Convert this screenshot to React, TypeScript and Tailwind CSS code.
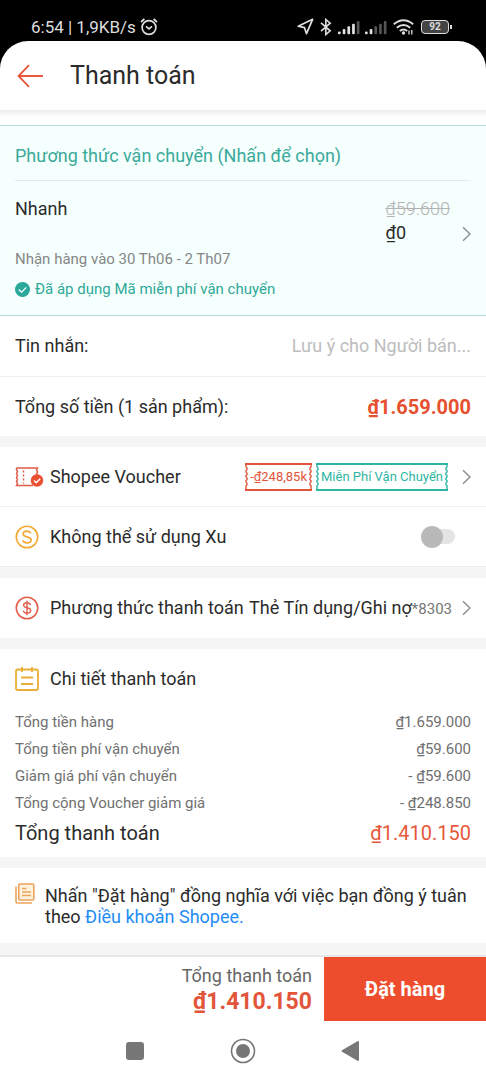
import type { ReactNode } from 'react';

const summary = [
  { label: 'Tổng tiền hàng', value: '₫1.659.000' },
  { label: 'Tổng tiền phí vận chuyển', value: '₫59.600' },
  { label: 'Giảm giá phí vận chuyển', value: '- ₫59.600' },
  { label: 'Tổng cộng Voucher giảm giá', value: '- ₫248.850' },
];

function Chevron() {
  return (
    <svg className="w-[9px] h-4 shrink-0" viewBox="0 0 9 16" fill="none" stroke="#8c8c8c" strokeWidth="1.4">
      <path d="M1 1.2L8 8l-7 6.8" />
    </svg>
  );
}

function Gap() {
  return <div className="h-[11px] bg-[#f5f5f5]" />;
}

function ChipEdge({ className = '' }: { className?: string }) {
  return (
    <svg className={`w-1 h-7 shrink-0 ${className}`} viewBox="0 0 4 28" fill="none" stroke="currentColor" strokeWidth="1.4">
      <path d="M0 1h4M0 27h4" strokeWidth="2" />
      <path d="M1 1v3q2.4 1.5 0 3.5v1.5q2.4 2 0 3.5v1.5q2.4 2 0 3.5v1.5q2.4 2 0 3.5v4.5" />
    </svg>
  );
}

function Chip({ color, children }: { color: string; children: ReactNode }) {
  return (
    <span className={`flex h-7 ${color}`}>
      <ChipEdge />
      <span className="flex items-center border-y-2 border-current px-px text-[13px] leading-4 whitespace-nowrap">
        {children}
      </span>
      <ChipEdge className="-scale-x-100" />
    </span>
  );
}

function Signal({ level }: { level: number }) {
  return (
    <svg className="w-[22px] h-4" viewBox="0 0 22 16">
      {[0, 1, 2, 3, 4].map((i) => (
        <rect
          key={i}
          x={i * 4.7}
          y={12.5 - i * 2.6}
          width="2.7"
          height={2.8 + i * 2.6}
          rx="1"
          fill={i < level ? '#e2e2e2' : '#555'}
        />
      ))}
    </svg>
  );
}

function StatusBar() {
  return (
    <div className="flex items-center h-[41px] pt-3 pl-[31px] pr-[34px] text-[#dedede]">
      <span className="text-[17px] leading-6 whitespace-nowrap">6:54 | 1,9KB/s</span>
      <svg className="ml-1 w-[18px] h-[18px]" viewBox="0 0 18 18" fill="none" stroke="currentColor" strokeWidth="1.7">
        <circle cx="9" cy="9.5" r="6.9" />
        <path d="M6 8.3l3 2.6 3-2.6M1 4l3.4-3M17 4l-3.4-3" />
      </svg>
      <div className="ml-auto flex items-center">
        <svg className="w-[17px] h-[17px]" viewBox="0 0 17 17" fill="none" stroke="currentColor" strokeWidth="1.7" strokeLinejoin="round">
          <path d="M15.6 1.3L1.2 8.2l6.3 1.5 2 6z" />
        </svg>
        <svg className="ml-1.5 w-3 h-[18px]" viewBox="0 0 12 18" fill="none" stroke="currentColor" strokeWidth="1.6">
          <path d="M1 4.8l9.2 8-4.4 3.7V1.5l4.4 3.7-9.2 8" />
        </svg>
        <div className="ml-1.5 flex gap-[5px]">
          <Signal level={4} />
          <Signal level={2} />
        </div>
        <svg className="ml-1.5 w-[21px] h-4" viewBox="0 0 21 16" fill="none" stroke="currentColor" strokeWidth="2">
          <path d="M.8 5.2q9.7-8 19.4 0M3.8 8.8q6.7-5.5 13.4 0M6.8 12q3.7-3 7.4 0" />
          <circle cx="10.5" cy="14" r="1.7" fill="currentColor" stroke="none" />
          <path d="M16 11.5v4M18.8 11v4.5" strokeWidth="1.3" />
        </svg>
        <span className="ml-[7px] flex items-center">
          <span className="flex h-[14px] w-[28px] items-center justify-center rounded-[4px] border border-[#dedede] bg-[#444] text-[10px] leading-3 font-bold">
            92
          </span>
          <span className="ml-px h-1 w-[2px] bg-[#dedede]" />
        </span>
      </div>
    </div>
  );
}

export default function App() {
  return (
    <div className="min-h-screen bg-black font-['Roboto',sans-serif] text-[#2b2b2b]">
      <StatusBar />

      <div className="overflow-hidden rounded-t-[28px] bg-white">
        <header className="flex h-[69px] items-center pl-[17px]">
          <button type="button" aria-label="Quay lại" className="flex">
            <svg className="h-6 w-[27px]" viewBox="0 0 27 24" fill="none" stroke="#e8583a" strokeWidth="1.8">
              <path d="M26 12H1.5M12 1.2L1.5 12 12 22.8" />
            </svg>
          </button>
          <h1 className="ml-[26px] text-[25px] leading-8">Thanh toán</h1>
        </header>
        <div className="h-[15px] bg-linear-to-b from-[#ececec] to-white to-50%" />

        {/* Vận chuyển */}
        <section className="border-y border-[#b5ddd9] bg-[#f5fffe] px-[15px] pb-4">
          <h2 className="border-b border-[#e1ecea] pt-[18px] pb-3 text-[18px] leading-6 text-[#3aaa99]">
            Phương thức vận chuyển (Nhấn để chọn)
          </h2>
          <button type="button" className="mt-4 flex w-full items-start text-left text-[18px] leading-6">
            <span className="flex-1">Nhanh</span>
            <span className="flex flex-col">
              <s className="font-light text-[#b3b3b3]">₫59.600</s>
              <span>₫0</span>
            </span>
            <span className="ml-3 mt-[29px]">
              <Chevron />
            </span>
          </button>
          <p className="mt-1 text-[15px] leading-5 text-[#868686]">Nhận hàng vào 30 Th06 - 2 Th07</p>
          <p className="mt-[10px] flex items-center gap-[5px] text-[15px] leading-5 text-[#2fa898]">
            <svg className="h-[15px] w-[15px]" viewBox="0 0 15 15">
              <circle cx="7.5" cy="7.5" r="7.5" fill="#2aa899" />
              <path d="M3.8 7.5l2.8 2.6 4.7-4.7" fill="none" stroke="#fff" strokeWidth="1.2" />
            </svg>
            Đã áp dụng Mã miễn phí vận chuyển
          </p>
        </section>

        <div className="flex h-[61px] items-center border-b border-[#eee] px-[15px] text-[18px] leading-6">
          <label htmlFor="note">Tin nhắn:</label>
          <input
            id="note"
            type="text"
            placeholder="Lưu ý cho Người bán..."
            className="min-w-0 flex-1 bg-transparent text-right outline-none placeholder:text-[#bdbdbd]"
          />
        </div>
        <div className="flex h-[59px] items-center justify-between px-[15px] leading-6">
          <span className="text-[18px]">Tổng số tiền (1 sản phẩm):</span>
          <span className="text-[20px] font-bold text-[#e6502f]">₫1.659.000</span>
        </div>
        <Gap />

        {/* Voucher và Xu */}
        <button type="button" className="flex h-[60px] w-full items-center border-b border-[#eee] px-[15px] text-left">
          <svg className="h-5 w-[29px]" viewBox="0 0 29 20" fill="none" stroke="#e05a45" strokeWidth="1.5">
            <path d="M1.5 1h21l-1 2 1 2-1 2 1 2M18 18.5H1.5l1-2-1-2 1-2-1-2 1-2-1-2 1-2-1-2v-1.5" />
            <path d="M8.5 3.5v13" strokeDasharray="2 2" />
            <circle cx="22" cy="13.5" r="6.2" fill="#e9502f" stroke="none" />
            <path d="M19 13.5l2.2 2.2 4-4" stroke="#fff" strokeWidth="1.4" />
          </svg>
          <span className="ml-[6px] flex-1 text-[18px] leading-6">Shopee Voucher</span>
          <span className="flex gap-1">
            <Chip color="text-[#e2553a]">-₫248,85k</Chip>
            <Chip color="text-[#2db5a3]">Miễn Phí Vận Chuyển</Chip>
          </span>
          <span className="ml-[14px]">
            <Chevron />
          </span>
        </button>
        <label className="flex h-[60px] items-center border-b border-[#eee] pr-[31px] pl-[15px]">
          <svg className="h-6 w-6" viewBox="0 0 24 24" fill="none" stroke="#f2aa35">
            <circle cx="12" cy="12" r="10.7" strokeWidth="1.6" />
            <path d="M15.8 8.3C15 6.7 13.6 6.2 12 6.2c-2.2 0-3.8 1.1-3.8 2.8 0 1.9 1.8 2.4 3.8 2.9s4.1 1.1 4.1 3.1c0 1.8-1.8 2.9-4.1 2.9-1.9 0-3.5-.8-4.2-2.5" strokeWidth="1.7" />
          </svg>
          <span className="ml-[11px] flex-1 text-[18px] leading-6">Không thể sử dụng Xu</span>
          <input type="checkbox" role="switch" className="peer sr-only" />
          <span className="flex items-center peer-checked:flex-row-reverse">
            <span className="z-10 h-[22px] w-[22px] rounded-full bg-[#b9b9b9]" />
            <span className="-ml-4 h-[15px] w-7 rounded-full bg-[#e4e4e4]" />
          </span>
        </label>
        <Gap />

        <button type="button" className="flex h-[60px] w-full items-center px-[15px] text-left">
          <svg className="h-6 w-6" viewBox="0 0 24 24" fill="none" stroke="#e2604e">
            <circle cx="12" cy="12" r="10.7" strokeWidth="1.6" />
            <path d="M15.5 9c-.4-1.5-1.7-2.2-3.5-2.2-2 0-3.4.9-3.4 2.4 0 1.7 1.5 2.2 3.4 2.6s3.7 1 3.7 2.8c0 1.6-1.6 2.6-3.7 2.6-2 0-3.4-.9-3.7-2.5M12 4.8v14.4" strokeWidth="1.4" />
          </svg>
          <span className="ml-[11px] flex-1 text-[18px] leading-6 whitespace-nowrap">Phương thức thanh toán</span>
          <span className="flex items-baseline leading-6 whitespace-nowrap">
            <span className="text-[18px]">Thẻ Tín dụng/Ghi nợ</span>
            <span className="text-[15px] text-[#757575]">*8303</span>
          </span>
          <span className="ml-[10px]">
            <Chevron />
          </span>
        </button>
        <Gap />

        {/* Chi tiết thanh toán */}
        <section className="px-[15px] pt-[18px] pb-3">
          <h2 className="flex items-center text-[18px] leading-6">
            <svg className="mr-[11px] h-6 w-6" viewBox="0 0 24 24" fill="none" stroke="#e9ae35" strokeWidth="1.8">
              <rect x="1" y="2.5" width="22" height="20.5" rx="1.5" />
              <path d="M7 0v5M17 0v5M6 10.5h12M6 17h12" />
            </svg>
            Chi tiết thanh toán
          </h2>
          <dl className="mt-[17px]">
            {summary.map((row) => (
              <div key={row.label} className="flex h-[27px] items-center justify-between text-[15px] leading-5 text-[#707070]">
                <dt>{row.label}</dt>
                <dd>{row.value}</dd>
              </div>
            ))}
            <div className="mt-[5px] flex justify-between text-[20px] leading-6">
              <dt>Tổng thanh toán</dt>
              <dd className="text-[#e6583a]">₫1.410.150</dd>
            </div>
          </dl>
        </section>
        <Gap />

        <section className="flex items-start px-[15px] pt-[15px] pb-4">
          <svg className="h-[21px] w-5 shrink-0" viewBox="0 0 20 21" fill="none" stroke="#eda45a" strokeWidth="1.6">
            <path d="M1 3.5v15q0 1.5 1.5 1.5H17" />
            <rect x="3.8" y="1" width="15" height="16" rx="1" fill="#fff3e0" />
            <path d="M7 5.5h4.5M7 9h9M7 12.5h9" />
          </svg>
          <p className="ml-[10px] mt-[2px] text-[18px] leading-[21px]">
            Nhấn "Đặt hàng" đồng nghĩa với việc bạn đồng ý tuân theo{' '}
            <a href="#terms" className="text-[#1f8df5]">Điều khoản Shopee.</a>
          </p>
        </section>
        <div className="h-[14px] border-b-2 border-[#e6e6e6] bg-[#f5f5f5]" />

        <footer className="flex h-16">
          <div className="flex flex-1 flex-col items-end pt-[7px] pr-3">
            <span className="text-[18px] leading-6 text-[#666]">Tổng thanh toán</span>
            <span className="text-[23px] leading-7 font-bold text-[#e2553a]">₫1.410.150</span>
          </div>
          <button type="button" className="w-1/3 bg-[#ee4d2d] text-[20px] font-bold text-white">
            Đặt hàng
          </button>
        </footer>

        <nav className="flex h-[59px] items-center justify-center gap-[84px] text-[#777]">
          <button type="button" aria-label="Ứng dụng gần đây">
            <svg className="h-[26px] w-[22px]" viewBox="0 0 22 26">
              <rect x="2" y="4" width="18" height="18" rx="3" fill="currentColor" />
            </svg>
          </button>
          <button type="button" aria-label="Màn hình chính">
            <svg className="h-[26px] w-[26px]" viewBox="0 0 26 26">
              <circle cx="13" cy="13" r="11.5" fill="none" stroke="currentColor" strokeWidth="1.6" />
              <circle cx="13" cy="13" r="7" fill="currentColor" />
            </svg>
          </button>
          <button type="button" aria-label="Trở về">
            <svg className="h-[26px] w-[22px]" viewBox="0 0 22 26">
              <path d="M18 4v18L2.5 13z" fill="currentColor" stroke="currentColor" strokeLinejoin="round" strokeWidth="2" />
            </svg>
          </button>
        </nav>
        <div className="h-px" />
      </div>
    </div>
  );
}
